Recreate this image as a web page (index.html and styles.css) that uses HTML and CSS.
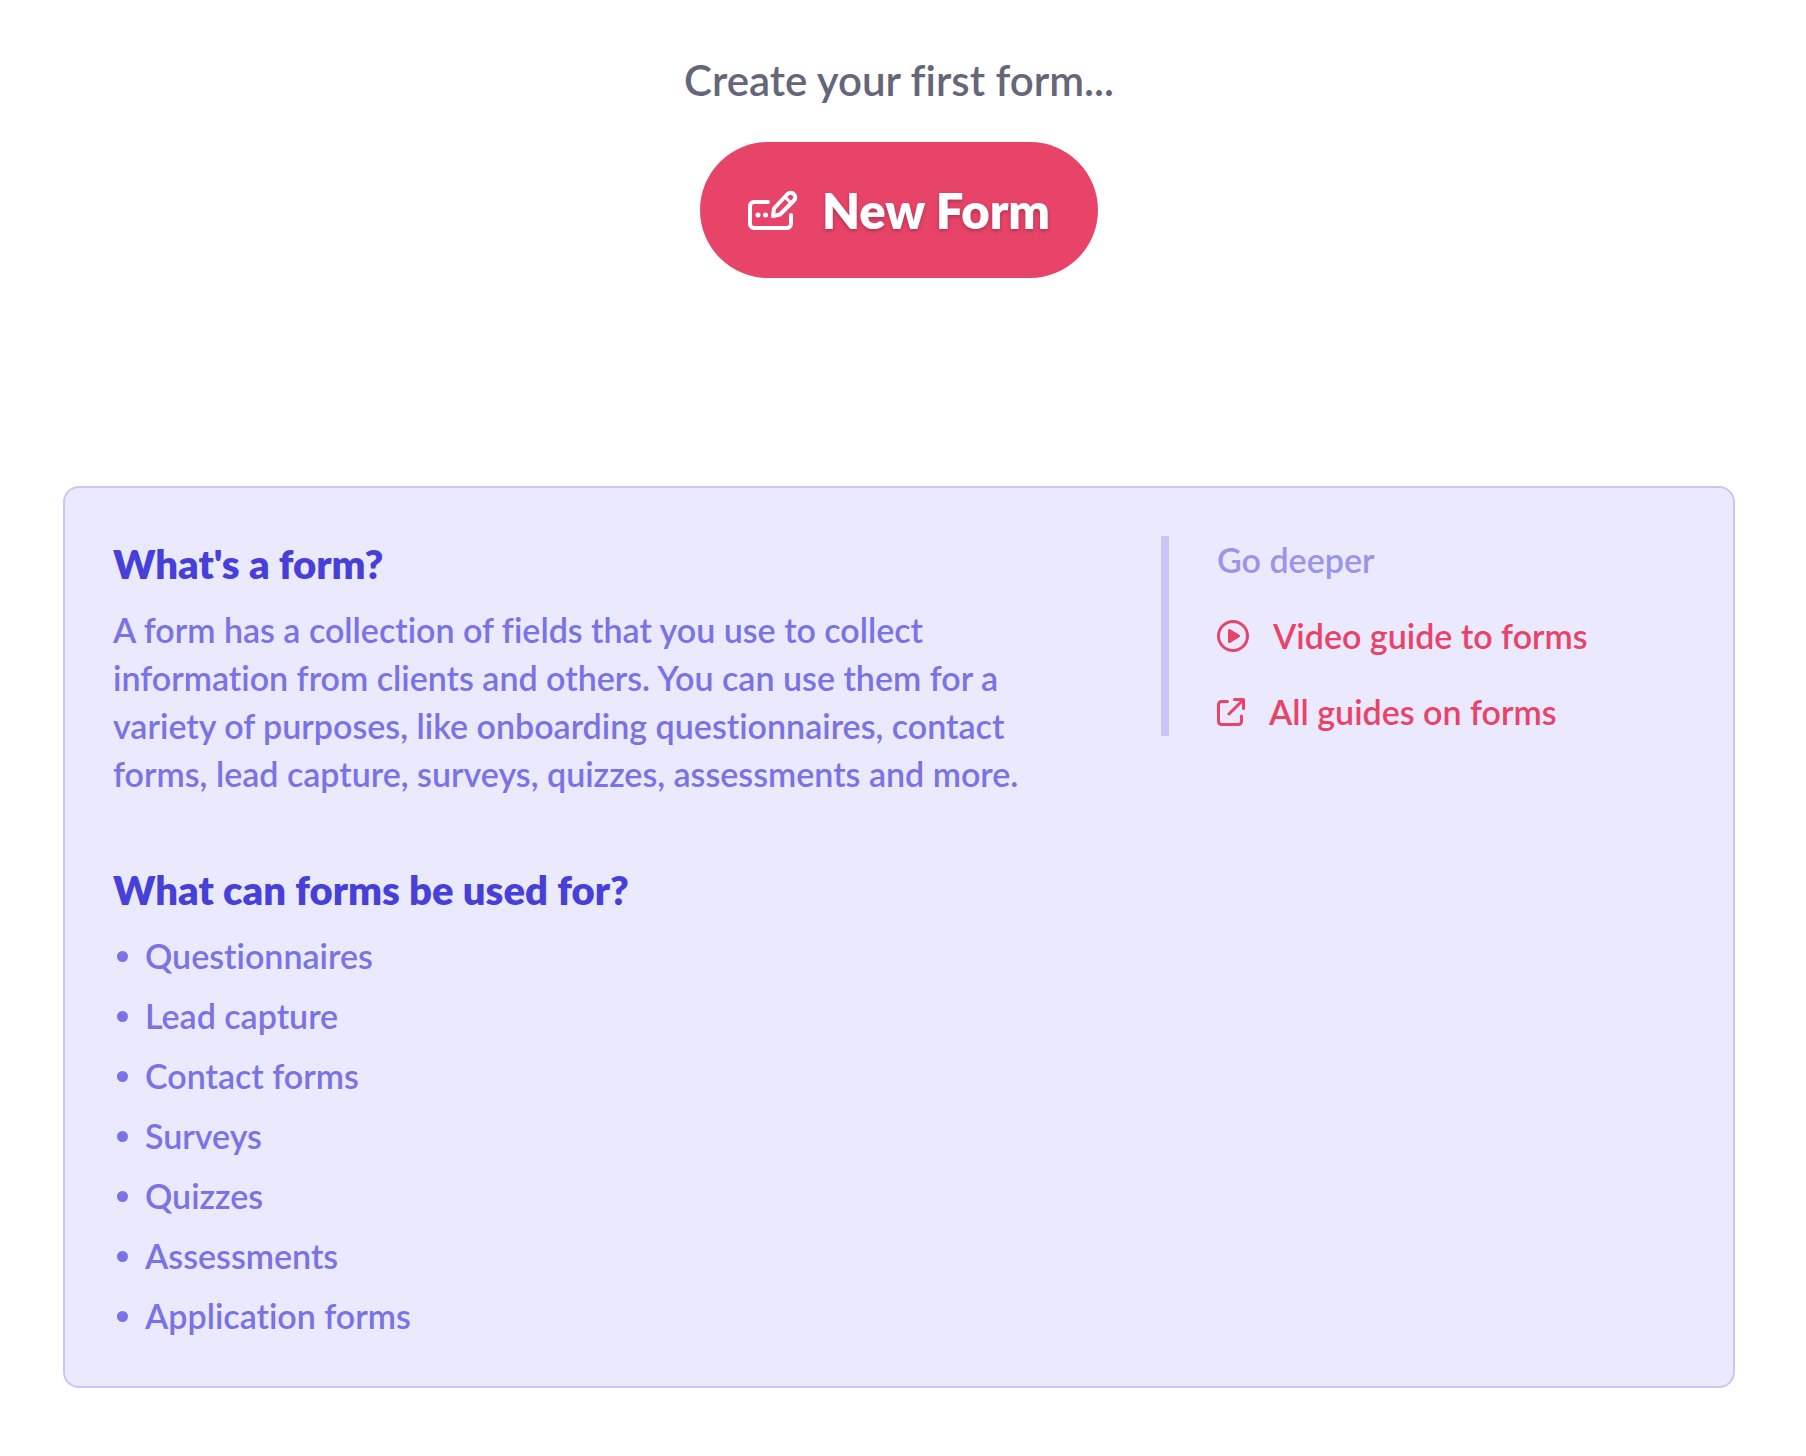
FILE: index.html
```html
<!DOCTYPE html>
<html lang="en">
<head>
  <meta charset="UTF-8" />
  <meta name="viewport" content="width=device-width, initial-scale=1.0" />
  <title>Forms</title>
  <link rel="stylesheet" href="styles.css">
</head>
<body>
  <main class="page">
    <section class="create">
      <p class="create-text">Create your first form...</p>
      <button type="button" class="new-form">
        <svg class="new-form-icon" viewBox="0 0 50 40" fill="none" stroke="currentColor" stroke-width="4" stroke-linecap="round" stroke-linejoin="round" aria-hidden="true">
          <path d="M20 12H6a4 4 0 0 0-4 4v18a4 4 0 0 0 4 4h33a4 4 0 0 0 4-4V25" />
          <path d="M25 26l1-7.500L39.500 4a4.600 4.600 0 0 1 6.500 6.500L32 24.500z" />
          <path d="M37 7l6 6" stroke-width="3" />
          <circle cx="10" cy="25" r="2.500" fill="currentColor" stroke="none" />
          <circle cx="17.500" cy="25" r="2.500" fill="currentColor" stroke="none" />
        </svg>
        <span>New Form</span>
      </button>
    </section>

    <section class="card">
      <div class="about">
        <h2>What's a form?</h2>
        <p>A form has a collection of fields that you use to collect information from clients and others. You can use them for a variety of purposes, like onboarding questionnaires, contact forms, lead capture, surveys, quizzes, assessments and more.</p>

        <h2>What can forms be used for?</h2>
        <ul class="uses">
          <li>Questionnaires</li>
          <li>Lead capture</li>
          <li>Contact forms</li>
          <li>Surveys</li>
          <li>Quizzes</li>
          <li>Assessments</li>
          <li>Application forms</li>
        </ul>
      </div>

      <aside class="deeper">
        <h3>Go deeper</h3>
        <a href="#" class="guide">
          <svg width="32" height="32" viewBox="0 0 32 32" aria-hidden="true">
            <circle cx="16" cy="16" r="14.500" fill="none" stroke="currentColor" stroke-width="3" />
            <path d="M12.500 10.500v11l9-5.500z" fill="currentColor" stroke="currentColor" stroke-width="3" stroke-linejoin="round" />
          </svg>
          <span>Video guide to forms</span>
        </a>
        <a href="#" class="guide">
          <svg width="28" height="28" viewBox="0 0 28 28" fill="none" stroke="currentColor" stroke-width="3" stroke-linecap="round" stroke-linejoin="round" aria-hidden="true">
            <path d="M10.500 3.500H4.500a3 3 0 0 0-3 3v17a3 3 0 0 0 3 3h17a3 3 0 0 0 3-3V18" />
            <path d="M12 16L26 2M17.500 1.500h9v9" />
          </svg>
          <span>All guides on forms</span>
        </a>
      </aside>
    </section>
  </main>
</body>
</html>
```

FILE: styles.css
```css
* {
  box-sizing: border-box;
}

body {
  margin: 0;
  background-color: #fff;
  font-family: Lato, "Open Sans", sans-serif;
  font-size: 34px;
  font-weight: 600;
  font-variant-ligatures: none;
  line-height: 48px;
}

.page {
  padding: 52px 71px 68px 63px;
}

/* top part */
.create {
  display: flex;
  flex-direction: column;
  align-items: center;
  gap: 34px;
}

.create-text {
  margin: 0;
  color: #656679;
  font-size: 42px;
  line-height: 56px;
}

.new-form {
  display: flex;
  align-items: center;
  gap: 24px;
  height: 136px;
  padding: 0 48px;
  border: none;
  border-radius: 68px;
  background-color: #e84469;
  color: #fff;
  font-family: inherit;
  font-size: 49px;
  font-weight: 800;
  text-shadow: 0 2px 4px rgba(0, 0, 0, 0.25);
  cursor: pointer;
}

.new-form-icon {
  width: 50px;
  height: 40px;
}

/* info card */
.card {
  display: grid;
  grid-template-columns: 2fr 1fr;
  align-items: start;
  margin-top: 208px;
  padding: 48px 48px 46px;
  border: 2px solid #c9c6f7;
  border-radius: 16px;
  background-color: #ebe9fe;
}

.about {
  padding-right: 96px;
  color: #7a73e5;
}

.about h2 {
  margin: 0 0 14px;
  color: #473fda;
  font-size: 40px;
  font-weight: 800;
  line-height: 56px;
}

.about p {
  margin: 0 0 64px;
}

.uses {
  margin: 0;
  padding: 0;
  list-style: none;
}

.uses li {
  display: flex;
  align-items: center;
  gap: 17px;
  padding-left: 4px;
  margin-bottom: 12px;
}

.uses li:last-child {
  margin-bottom: 0;
}

.uses li::before {
  content: "";
  width: 11px;
  height: 11px;
  border-radius: 50%;
  background-color: #7a73e5;
}

.deeper {
  display: flex;
  flex-direction: column;
  gap: 28px;
  border-left: 8px solid #c9c6f7;
  padding-left: 48px;
}

.deeper h3 {
  margin: 0;
  color: #9a94ec;
  font-size: 34px;
  font-weight: 600;
}

.guide {
  display: flex;
  align-items: center;
  gap: 24px;
  color: #e84469;
  text-decoration: none;
}
```
